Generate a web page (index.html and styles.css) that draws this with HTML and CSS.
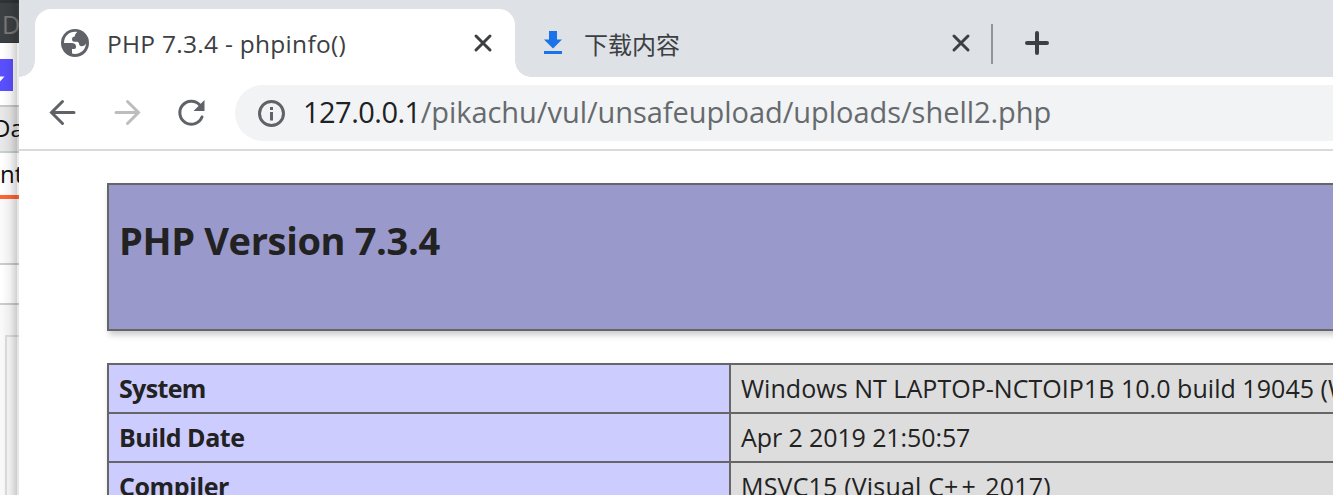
FILE: index.html
```html
<!DOCTYPE html>
<html lang="zh">
<head>
<meta charset="utf-8">
<title>PHP 7.3.4 - phpinfo()</title>
<link rel="stylesheet" href="styles.css">
</head>
<body>
<aside class="behind">
  <div class="b-title">D</div>
  <div class="b-tools"><div class="b-button"><svg width="13" height="32" viewBox="0 0 13 32"><path d="M-4 17.5H4.500L0 22.500Z" fill="#fff"/></svg></div></div>
  <div class="b-tabs">Da</div>
  <div class="b-subtabs">nt</div>
  <div class="b-gap"></div>
  <div class="b-row"></div>
  <div class="b-panel"><div class="b-box"></div></div>
</aside>
<main class="window">
  <header class="strip">
    <div class="tab active">
      <svg class="globe" width="28" height="28" viewBox="0 0 28 28"><circle cx="14" cy="14" r="14" fill="#5f6368"/><path d="M16.200 3C9 1.800 3 7 3 14H10.500C13.500 14 15 15.300 15 17.200V18.300C15 19.500 14.300 20 13.300 20H11V24.600C18.500 26.500 25 21 25 14.300C24 16.500 22.500 17.200 20.800 17.200C18.800 17.200 18.200 16 17.900 14.200C17.600 13 16.500 12.700 15 12.700H13.200C11.800 12.700 11 11.700 11 10.300C11 8.600 12 7.700 13.700 7.500C14 5.500 14.800 4.500 16.200 3Z" fill="#fff"/></svg>
      <span class="tab-title t1">PHP 7.3.4 - phpinfo()</span>
      <svg class="close" width="20" height="20" viewBox="0 0 20 20"><path d="M3 3L17 17M17 3L3 17"/></svg>
    </div>
    <div class="tab second">
      <svg class="download" width="18" height="24" viewBox="0 0 18 24"><path d="M5 0H13V8.500H18L9 17.500L0 8.500H5ZM0 20H18V23H0Z" fill="#1a73e8"/></svg>
      <span class="tab-title t2">下载内容</span>
      <svg class="close" width="20" height="20" viewBox="0 0 20 20"><path d="M3 3L17 17M17 3L3 17"/></svg>
    </div>
    <svg class="plus" width="24" height="24" viewBox="0 0 24 24"><path d="M12 2V22M2 12H22"/></svg>
  </header>
  <nav class="toolbar">
    <svg class="back" width="28" height="28" viewBox="0 0 28 28"><path d="M25 13.500H3M13.500 2.500L2.500 13.500L13.500 24.500"/></svg>
    <svg class="forward" width="28" height="28" viewBox="0 0 28 28"><path d="M3 13.500H25M14.500 2.500L25.500 13.500L14.500 24.500"/></svg>
    <svg class="reload" width="28" height="28" viewBox="0 0 28 28"><path d="M22.800 6A11.500 11.500 0 1 0 25 18" fill="none" stroke="#5f6368" stroke-width="3" stroke-linecap="round"/><path d="M27.500 1V12H16.500Z" fill="#5f6368"/></svg>
    <div class="address">
      <svg width="28" height="28" viewBox="0 0 28 28"><circle cx="14.500" cy="14.500" r="12" fill="none" stroke="#5f6368" stroke-width="3"/><path d="M13 8H16V11H13ZM13 13H16V21.500H13Z" fill="#5f6368"/></svg>
      <span class="url"><span class="host">127.0.0.1</span>/pikachu/vul/unsafeupload/uploads/shell2.php</span>
    </div>
  </nav>
  <section class="page">
    <div class="banner"><h1>PHP Version 7.3.4</h1></div>
    <div class="info">
      <div class="key k1">System</div><div class="value v1">Windows NT LAPTOP-NCTOIP1B 10.0 build 19045 (Windows 10)</div>
      <div class="key k2">Build Date</div><div class="value v2">Apr 2 2019 21:50:57</div>
      <div class="key k3">Compiler</div><div class="value v3">MSVC15 (Visual C<span class="plusplus">++</span> 2017)</div>
    </div>
  </section>
</main>
</body>
</html>
```
FILE: styles.css
```css
* { box-sizing: border-box; }
body {
  margin: 0;
  width: 1333px;
  height: 495px;
  overflow: hidden;
  display: flex;
  background: #fff;
  font-family: "Open Sans", "Noto Sans CJK SC", sans-serif;
}
svg { display: block; flex: none; overflow: visible; }

/* Window showing behind the browser */
.behind {
  position: relative;
  flex: none;
  width: 19px;
  height: 495px;
  overflow: hidden;
  color: #111;
  font-size: 24px;
  white-space: nowrap;
}
.behind::after {
  content: "";
  position: absolute;
  inset: 0;
  background: linear-gradient(90deg, rgba(0,0,0,0) 2px, rgba(0,0,0,.05) 10px, rgba(0,0,0,.18) 17px, rgba(0,0,0,.08) 17px);
}
.b-title {
  height: 43px;
  padding-left: 2px;
  background: #3d4042;
  border-top: 3px solid #303234;
  border-bottom: 1px solid #34383a;
  color: #77797a;
  font-size: 25px;
  line-height: 43px;
}
.b-tools { height: 62px; padding-top: 16px; background: #fff; }
.b-button { width: 13px; height: 32px; background: #5a4fff; overflow: hidden; }
.b-tabs {
  height: 48px;
  border-top: 2px solid #c8c8c8;
  border-bottom: 2px solid #c9d0d0;
  background: #e8e8e8;
  line-height: 41px;
  text-indent: -7px;
}
.b-subtabs {
  height: 46px;
  border-bottom: 4px solid #ff6633;
  background: #fff;
  line-height: 41px;
  text-indent: 0;
}
.b-gap { height: 64px; background: #fafafa; }
.b-row { height: 42px; border-top: 2px solid #ccc; border-bottom: 2px solid #ccc; background: #fff; }
.b-panel { height: 190px; padding: 30px 0 0 5px; background: #f9f9f9; }
.b-box { height: 170px; border-top: 2px solid #dedede; border-left: 2px solid #dedede; }

/* Tabs */
.window { flex: none; width: 1314px; height: 495px; overflow: hidden; background: #fff; }
.strip {
  display: flex;
  align-items: flex-start;
  height: 77px;
  padding: 9px 0 0 16px;
  background: #dee1e6;
}
.tab { display: flex; align-items: center; height: 68px; }
.active {
  position: relative;
  width: 480px;
  padding: 0 22px 0 26px;
  background: #fff;
  border-radius: 16px 16px 0 0;
}
.active::before, .active::after {
  content: "";
  position: absolute;
  bottom: 0;
  width: 16px;
  height: 16px;
}
.active::before { left: -16px; background: radial-gradient(circle at 0 0, transparent 15.500px, #fff 16px); }
.active::after { right: -16px; background: radial-gradient(circle at 100% 0, transparent 15.500px, #fff 16px); }
.second { position: relative; width: 478px; padding: 0 22px 0 29px; }
.second::after {
  content: "";
  position: absolute;
  right: 0;
  top: 15px;
  width: 2px;
  height: 40px;
  background: #8f949b;
}
.close { margin-left: auto; }
.close path { fill: none; stroke: #3c4043; stroke-width: 3; stroke-linecap: round; }
.tab-title { padding-top: 2px; color: #3c4043; font-size: 24.500px; line-height: 34px; white-space: pre; }
.t1 { margin-left: 18px; letter-spacing: .28px; }
.t2 { margin-left: 22px; font-size: 24px; font-weight: 400; font-family: "Noto Sans CJK SC", sans-serif; }
.plus { margin: 22px 0 0 32px; }
.plus path { fill: none; stroke: #3c4043; stroke-width: 4; stroke-linecap: round; }

/* Toolbar */
.toolbar {
  display: flex;
  align-items: center;
  height: 74px;
  padding: 0 0 0 30px;
  border-bottom: 2px solid #dadada;
}
.back path, .forward path { fill: none; stroke: #5f6368; stroke-width: 3; stroke-linecap: round; }
.forward { margin-left: 36px; }
.forward path { stroke: #bdbdbd; }
.reload { margin-left: 36px; }
.address {
  flex: 1;
  display: flex;
  align-items: center;
  height: 56px;
  margin-left: 30px;
  padding-left: 22px;
  border-radius: 28px 0 0 28px;
  background: #f1f3f4;
}
.url { margin: -4px 0 0 18px; font-size: 29px; letter-spacing: -.04px; color: #666a6e; white-space: pre; }
.host { color: #202124; letter-spacing: -.52px; }

/* phpinfo page */
.page { padding: 32px 0 0 88px; color: #222; }
.banner {
  width: 1868px;
  height: 148px;
  padding: 30px 0 0 10px;
  border: 2px solid #666;
  background: #99c;
  box-shadow: 2px 4px 6px #ccc;
}
h1 { margin: 0; font-size: 38px; line-height: 50px; font-weight: 700; letter-spacing: -.35px; white-space: pre; }
.info {
  display: grid;
  grid-template-columns: 620px 1244px;
  gap: 2px;
  width: 1868px;
  margin-top: 32px;
  border: 2px solid #666;
  background: #666;
  box-shadow: 2px 4px 6px #ccc;
}
.key, .value { height: 47px; padding: 0 10px; font-size: 25px; line-height: 47px; white-space: pre; overflow: hidden; }
.key { background: #ccf; font-weight: 700; }
.value { background: #ddd; }
.k1 { letter-spacing: -.65px; }
.k2 { letter-spacing: -.45px; }
.k3 { letter-spacing: -.4px; }
.v1 { letter-spacing: .04px; }
.v2 { letter-spacing: -.1px; }
.v3 { letter-spacing: .18px; }
.plusplus { letter-spacing: 3px; }
```
